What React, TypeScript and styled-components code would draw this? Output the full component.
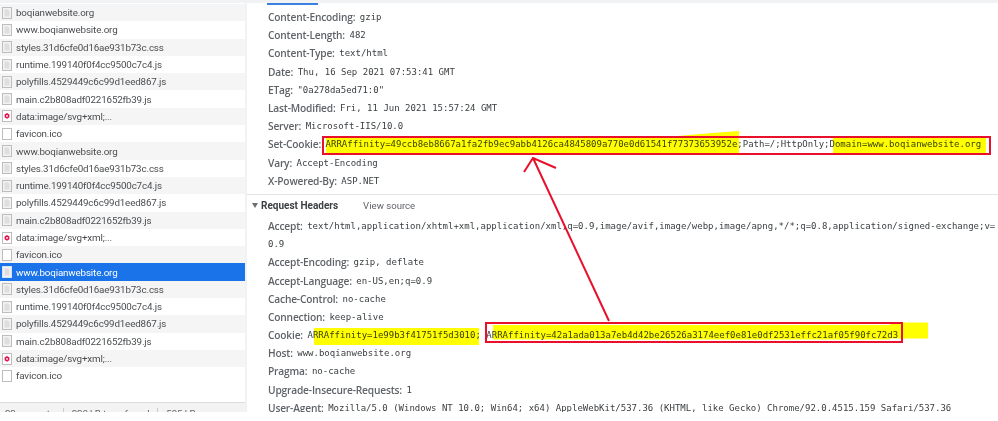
import React from 'react';
import styled, { createGlobalStyle } from 'styled-components';

const GlobalStyle = createGlobalStyle`
	html, body {
		margin: 0;
		background: #fff;
		overflow: hidden;
	}
`;

const Frame = styled.div`
	position: relative;
	width: 998px;
	height: 421px;
	background: #fff;
	overflow: hidden;
	filter: blur(0.38px);
`;

const Panels = styled.div`
	display: flex;
	height: 412px;
	background: #f1f2f3;
	padding-top: 3px;
	box-sizing: border-box;
`;

const Sidebar = styled.aside`
	width: 245px;
	flex: none;
	display: flex;
	flex-direction: column;
	background: #fff;
	padding-top: 1px;
	font-family: Roboto, sans-serif;
	font-size: 9.8px;
	letter-spacing: -0.15px;
	overflow: hidden;
`;

const RequestList = styled.ul`
	flex: 1;
	list-style: none;
	margin: 0;
	padding: 0;
`;

const Request = styled.li<{ $striped: boolean; $selected: boolean }>`
	display: flex;
	align-items: center;
	gap: 4px;
	height: 17.3px;
	padding-left: 2px;
	white-space: nowrap;
	color: ${p => (p.$selected ? '#fff' : '#4a4d50')};
	background: ${p => (p.$selected ? '#1a73e8' : p.$striped ? '#f5f5f5' : '#fff')};
`;

const StatusBar = styled.div`
	flex: none;
	height: 10px;
	display: flex;
	gap: 8px;
	padding: 5px 0 0 5px;
	box-sizing: border-box;
	background: #f3f3f3;
	border-top: 1px solid #dcdcdc;
	color: #666;
	line-height: 12px;
	white-space: nowrap;
	overflow: hidden;
`;

const StatusItem = styled.span`
	padding-right: 8px;
	border-right: 1px solid #ccc;
	height: 12px;

	&:last-child {
		border-right: none;
	}
`;

const Details = styled.section`
	flex: 1;
	min-width: 0;
	margin-left: 2px;
	background: #fff;
	position: relative;
	overflow: hidden;
	padding-top: 5px;
	font-family: Roboto, sans-serif;
`;

const ActiveTab = styled.div`
	position: absolute;
	top: -3px;
	left: 20px;
	width: 51px;
	height: 5px;
	background: #3b7fe0;
`;

const HeaderBlock = styled.div`
	padding-left: 21px;
`;

const HeaderRow = styled.div`
	display: flex;
	align-items: center;
	height: 18.2px;
	white-space: nowrap;
`;

const HeaderName = styled.span`
	font-family: 'Open Sans', sans-serif;
	font-size: 10.2px;
	font-weight: 600;
	letter-spacing: -0.18px;
	color: #5f6368;
	margin-right: 4.5px;
`;

const HeaderValue = styled.span`
	font-family: 'DejaVu Sans Mono', monospace;
	font-size: 9px;
	color: #3c4043;
`;

const Divider = styled.div`
	height: 1px;
	margin: 4px 0 0;
	background: #e4e4e4;
`;

const SectionTitle = styled.div`
	display: flex;
	align-items: center;
	height: 22px;
	padding-left: 5px;
	white-space: nowrap;
`;

const Caret = styled.span`
	width: 0;
	height: 0;
	margin-right: 3px;
	border-left: 3px solid transparent;
	border-right: 3px solid transparent;
	border-top: 5px solid #6e6e6e;
`;

const SectionName = styled.span`
	font-size: 10px;
	font-weight: 700;
	color: #3c4043;
`;

const ViewSource = styled.span`
	margin-left: 25px;
	font-size: 9.6px;
	color: #5f6368;
`;

const MarkerLayer = styled.svg`
	position: absolute;
	inset: 0;
	mix-blend-mode: multiply;
	pointer-events: none;
`;

const InkLayer = styled.svg`
	position: absolute;
	inset: 0;
	pointer-events: none;
`;

type IconKind = 'doc' | 'blank' | 'svg';

function FileIcon({ kind, selected }: { kind: IconKind; selected: boolean }) {
	return (
		<svg width="10" height="12" viewBox="0 0 10 12" style={{ flex: 'none' }}>
			<rect x="0.5" y="0.5" width="9" height="11" fill={kind === 'doc' ? '#f2f2f2' : '#fff'} stroke={selected ? '#d5e3f8' : '#bdbdbd'} />
			{kind === 'doc' && <path d="M2.5 2.5h3.5l1.500 1.500v5.500h-5z" fill="#dedede" />}
			{kind === 'svg' && (
				<>
					<path d="M5 3l2.400 1.400v2.900L5 8.700 2.600 7.300V4.400z" fill="#e2134f" />
					<circle cx="5" cy="5.900" r="0.900" fill="#fff" />
				</>
			)}
		</svg>
	);
}

const CHUNK_NAMES: [string, IconKind][] = [
	['styles.31d6cfe0d16ae931b73c.css', 'doc'],
	['runtime.199140f0f4cc9500c7c4.js', 'doc'],
	['polyfills.4529449c6c99d1eed867.js', 'doc'],
	['main.c2b808adf0221652fb39.js', 'doc'],
	['data:image/svg+xml;...', 'svg'],
	['favicon.ico', 'blank'],
];

const REQUESTS: [string, IconKind][] = [
	['boqianwebsite.org', 'doc'],
	['www.boqianwebsite.org', 'doc'],
	...CHUNK_NAMES,
	['www.boqianwebsite.org', 'doc'],
	...CHUNK_NAMES,
	['www.boqianwebsite.org', 'doc'],
	...CHUNK_NAMES,
];

const SELECTED_INDEX = 15;

const RESPONSE_HEADERS = [
	['Content-Encoding', 'gzip'],
	['Content-Length', '482'],
	['Content-Type', 'text/html'],
	['Date', 'Thu, 16 Sep 2021 07:53:41 GMT'],
	['ETag', '"0a278da5ed71:0"'],
	['Last-Modified', 'Fri, 11 Jun 2021 15:57:24 GMT'],
	['Server', 'Microsoft-IIS/10.0'],
	['Set-Cookie', 'ARRAffinity=49ccb8eb8667a1fa2fb9ec9abb4126ca4845809a770e0d61541f77373653952e;Path=/;HttpOnly;Domain=www.boqianwebsite.org'],
	['Vary', 'Accept-Encoding'],
	['X-Powered-By', 'ASP.NET'],
];

const REQUEST_HEADERS = [
	['Accept-Encoding', 'gzip, deflate'],
	['Accept-Language', 'en-US,en;q=0.9'],
	['Cache-Control', 'no-cache'],
	['Connection', 'keep-alive'],
	['Cookie', 'ARRAffinity=1e99b3f41751f5d3010; ARRAffinity=42a1ada013a7eb4d42be26526a3174eef0e81e0df2531effc21af05f90fc72d3'],
	['Host', 'www.boqianwebsite.org'],
	['Pragma', 'no-cache'],
	['Upgrade-Insecure-Requests', '1'],
	['User-Agent', 'Mozilla/5.0 (Windows NT 10.0; Win64; x64) AppleWebKit/537.36 (KHTML, like Gecko) Chrome/92.0.4515.159 Safari/537.36'],
];

function Header({ name, value }: { name: string; value: string }) {
	return (
		<HeaderRow>
			<HeaderName>{name}:</HeaderName>
			<HeaderValue>{value}</HeaderValue>
		</HeaderRow>
	);
}

function App() {
	return (
		<Frame>
			<GlobalStyle />
			<Panels>
				<Sidebar>
					<RequestList>
						{REQUESTS.map(([name, kind], i) => (
							<Request key={i} $striped={i % 2 === 0} $selected={i === SELECTED_INDEX}>
								<FileIcon kind={kind} selected={i === SELECTED_INDEX} />
								{name}
							</Request>
						))}
					</RequestList>
					<StatusBar>
						<StatusItem>22 requests</StatusItem>
						<StatusItem>220 kB transferred</StatusItem>
						<StatusItem>535 kB resources</StatusItem>
					</StatusBar>
				</Sidebar>
				<Details>
					<ActiveTab />
					<HeaderBlock>
						{RESPONSE_HEADERS.map(([name, value]) => (
							<Header key={name} name={name} value={value} />
						))}
					</HeaderBlock>
					<Divider />
					<SectionTitle>
						<Caret />
						<SectionName>Request Headers</SectionName>
						<ViewSource>View source</ViewSource>
					</SectionTitle>
					<HeaderBlock>
						<Header
							name="Accept"
							value="text/html,application/xhtml+xml,application/xml;q=0.9,image/avif,image/webp,image/apng,*/*;q=0.8,application/signed-exchange;v="
						/>
						<HeaderRow>
							<HeaderValue>0.9</HeaderValue>
						</HeaderRow>
						{REQUEST_HEADERS.map(([name, value]) => (
							<Header key={name} name={name} value={value} />
						))}
					</HeaderBlock>
				</Details>
			</Panels>
			<MarkerLayer width="998" height="421" viewBox="0 0 998 421">
				<path d="M326 138h330l44-4 39-3v22H326z" fill="#ffff00" />
				<rect x="833" y="137" width="153" height="16" fill="#ffff00" />
				<rect x="314" y="328" width="165" height="17" fill="#ffff00" />
				<path d="M493 325h397v-2.500h38v16h-38v1H493z" fill="#ffff00" />
			</MarkerLayer>
			<InkLayer width="998" height="421" viewBox="0 0 998 421">
				<g fill="none" stroke="#e8102a" strokeWidth="2">
					<rect x="323" y="137" width="667" height="17" />
					<rect x="486" y="323" width="416" height="19" />
					<path d="M609 321L533 158M524 172L533 158L556 168" />
				</g>
			</InkLayer>
		</Frame>
	);
}

export default App;
